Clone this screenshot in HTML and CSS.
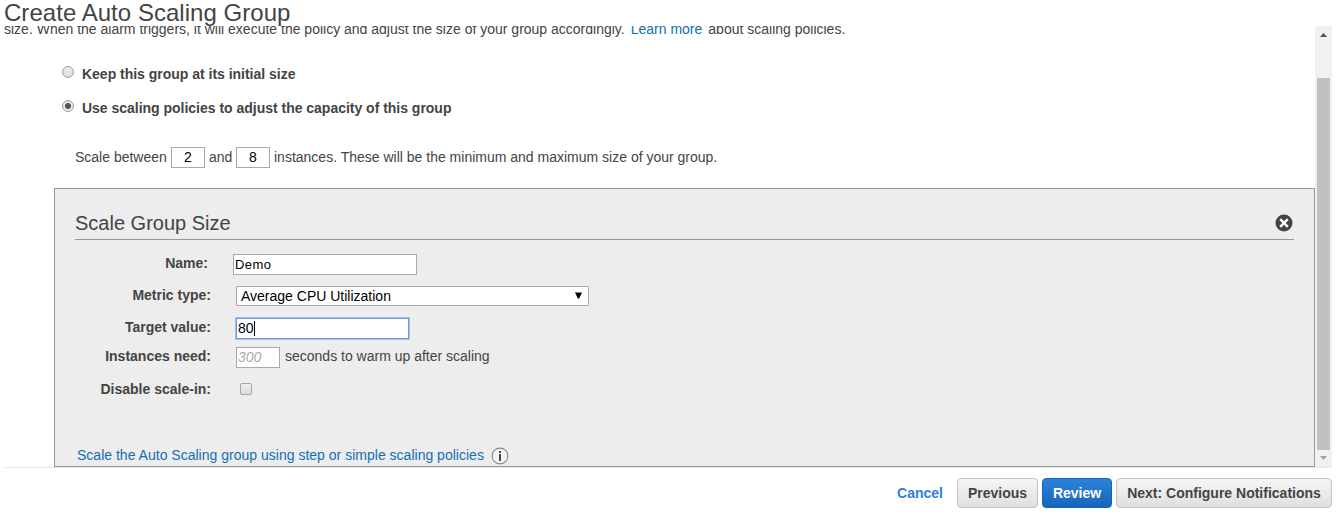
FILE: index.html
```html
<!DOCTYPE html>
<html lang="en">
<head>
<meta charset="utf-8">
<title>Create Auto Scaling Group</title>
<link rel="stylesheet" href="styles.css">
</head>
<body>
<header class="page-header"><h1 class="page-title"><span class="t-title">Create Auto Scaling Group</span></h1></header>
<div class="viewport">
  <main class="content">
    <p class="intro"><span class="t-intro">size. When the alarm triggers, it will execute the policy and adjust the size of your group accordingly.</span><a class="link learn">Learn more</a><span class="t-about">about scaling policies.</span></p>
    <div class="option"><span class="radio"></span><b class="t-keep">Keep this group at its initial size</b></div>
    <div class="option option-second"><span class="radio radio-on"></span><b class="t-use">Use scaling policies to adjust the capacity of this group</b></div>
    <div class="range"><span class="range-start">Scale between</span><span class="field count">2</span><span class="range-and">and</span><span class="field count">8</span><span class="range-end">instances. These will be the minimum and maximum size of your group.</span></div>
    <section class="policy">
      <div class="policy-head">
        <h2 class="policy-title"><span>Scale Group Size</span></h2>
        <svg class="close" width="18" height="18" viewBox="0 0 18 18"><circle cx="9" cy="9" r="8.5" fill="#444"/><path d="M5.2 5.2l7.6 7.6M12.8 5.2l-7.6 7.6" stroke="#fff" stroke-width="2.4"/></svg>
      </div>
      <div class="row row-name"><b class="label">Name:</b><span class="field name">Demo</span></div>
      <div class="row row-metric"><b class="label">Metric type:</b><span class="field select"><span>Average CPU Utilization</span><svg width="7" height="7" viewBox="0 0 7 7"><path d="M0 .5h7L4.2 6.5H2.8z" fill="#000"/></svg></span></div>
      <div class="row row-target"><b class="label">Target value:</b><span class="field target">80<i class="caret"></i></span></div>
      <div class="row row-warm"><b class="label">Instances need:</b><span class="field seconds">300</span><span class="warm-text">seconds to warm up after scaling</span></div>
      <div class="row row-disable"><b class="label">Disable scale-in:</b><span class="checkbox"></span></div>
      <div class="policy-foot"><a class="link">Scale the Auto Scaling group using step or simple scaling policies</a>
        <svg width="18" height="18" viewBox="0 0 18 18"><circle cx="9" cy="9" r="7.9" fill="#f4f4f4" stroke="#888" stroke-width="1.1"/><path d="M8 4h2v2H8zM8 7h2v7H8z" fill="#444"/></svg>
      </div>
    </section>
  </main>
  <div class="scrollbar">
    <svg class="arrow-up" width="7" height="4" viewBox="0 0 7 4"><path d="M3.5 0L7 4H0z" fill="#505050"/></svg>
    <div class="thumb"></div>
    <svg class="arrow-down" width="7" height="4" viewBox="0 0 7 4"><path d="M0 0h7L3.5 4z" fill="#a3a3a3"/></svg>
  </div>
</div>
<footer class="actions"><a class="cancel">Cancel</a><span class="btn previous">Previous</span><span class="btn review">Review</span><span class="btn next">Next: Configure Notifications</span></footer>
</body>
</html>
```
FILE: styles.css
```css
* { box-sizing: border-box; }
body { margin: 0; padding: 0 5px 0 4px; width: 1337px; height: 516px; overflow: hidden; background: #fff; color: #444; font: 14px/18px "Liberation Sans", Arial, sans-serif; }
h1, h2, p { margin: 0; font-weight: normal; }
svg { display: block; flex: none; }
span, b, a { white-space: nowrap; }
.page-header { height: 26px; }
.page-title { font-size: 24px; line-height: 26px; letter-spacing: .04px; position: relative; z-index: 1; }
.viewport { display: flex; height: 442px; overflow: hidden; border-bottom: 1px solid #e8e8e8; }
.content { width: 1311px; flex: none; }
.intro { display: flex; margin-top: -6px; height: 18px; }
.link { color: #146eb4; }
.learn { margin-left: 6px; }
.t-about { margin-left: 6px; }
.option { display: flex; margin-top: 27px; padding-left: 58px; height: 18px; }
.option b { letter-spacing: -.015px; }
.option-second { margin-top: 16px; }
.radio { width: 12px; height: 12px; margin: 1px 8px 0 0; border: 1px solid #a0a0a0; border-radius: 50%; background: linear-gradient(#eee, #ddd); flex: none; }
.radio-on { background: radial-gradient(circle, #555 0 2.6px, #e7e7e7 3.4px); }
.range { display: flex; margin-top: 30px; padding-left: 71px; height: 21px; line-height: 20px; }
.field { display: block; background: #fff; border: 1px solid #a9a9a9; color: #000; flex: none; }
.count { width: 34px; height: 21px; text-align: center; line-height: 19px; }
.range-start { width: 96px; }
.range-and { width: 31px; padding-left: 4px; }
.range-end { padding-left: 4px; }
.policy { margin: 20px 0 0 50px; height: 279px; border: 1px solid #979797; background: #ededed; padding: 25px 20px 0; }
.policy-head { display: flex; justify-content: space-between; height: 26px; border-bottom: 1px solid #979797; }
.policy-title { font-size: 20px; line-height: 18px; }
.close { margin: 0 1px 0 0; }
.row { display: flex; height: 21px; }
.label { width: 136px; text-align: right; line-height: 18px; flex: none; }
.row-name { margin-top: 14px; }
.row-name .label { width: 133px; }
.name { width: 184px; margin-left: 25px; padding-left: 1px; font-size: 13px; line-height: 20px; letter-spacing: .4px; }
.row-metric { margin-top: 11px; }
.select { display: flex; justify-content: space-between; width: 353px; height: 20px; margin-left: 25px; padding: 0 6px 0 4px; line-height: 19px; border-radius: 1px; }
.select svg { margin-top: 5px; }
.row-target { margin-top: 11px; }
.target { display: flex; width: 173px; margin-left: 25px; padding-left: 1px; line-height: 19px; border-color: #6f97dc; box-shadow: 0 0 0 1px #a2bff0; }
.caret { width: 1px; height: 15px; margin-top: 2px; background: #000; }
.row-warm { margin-top: 8px; }
.seconds { width: 44px; margin-left: 25px; padding-left: 1px; color: #a9a9a9; font-style: italic; line-height: 19px; }
.warm-text { margin-left: 5px; }
.row-disable { margin-top: 12px; }
.checkbox { width: 12px; height: 12px; margin: 3px 0 0 29px; border: 1px solid #a5a5a5; border-radius: 2px; background: linear-gradient(#eee, #ddd); }
.policy-foot { display: flex; gap: 7px; margin-top: 45px; padding-left: 2px; }
.policy-foot .link { letter-spacing: .01px; }
.policy-foot svg { margin-top: 1px; }
.scrollbar { width: 17px; background: #f1f1f1; display: flex; flex-direction: column; align-items: center; }
.arrow-up { margin-top: 7px; }
.thumb { width: 13px; height: 372px; margin: 41px 0 6px; background: #c1c1c1; flex: none; }
.actions { display: flex; justify-content: flex-end; padding-top: 10px; font-weight: bold; line-height: 28px; }
.cancel { color: #2e7de0; margin: 1px 14px 0 0; }
.btn { height: 30px; border: 1px solid #c4c4c4; border-radius: 4px; background: linear-gradient(#f6f6f6, #dfdfdf); text-align: center; margin-left: 4px; }
.previous { width: 81px; margin-left: 0; }
.review { width: 70px; color: #fff; border-color: #1664b4; background: linear-gradient(#2c83dc, #1665bb); }
.next { width: 216px; }
```
